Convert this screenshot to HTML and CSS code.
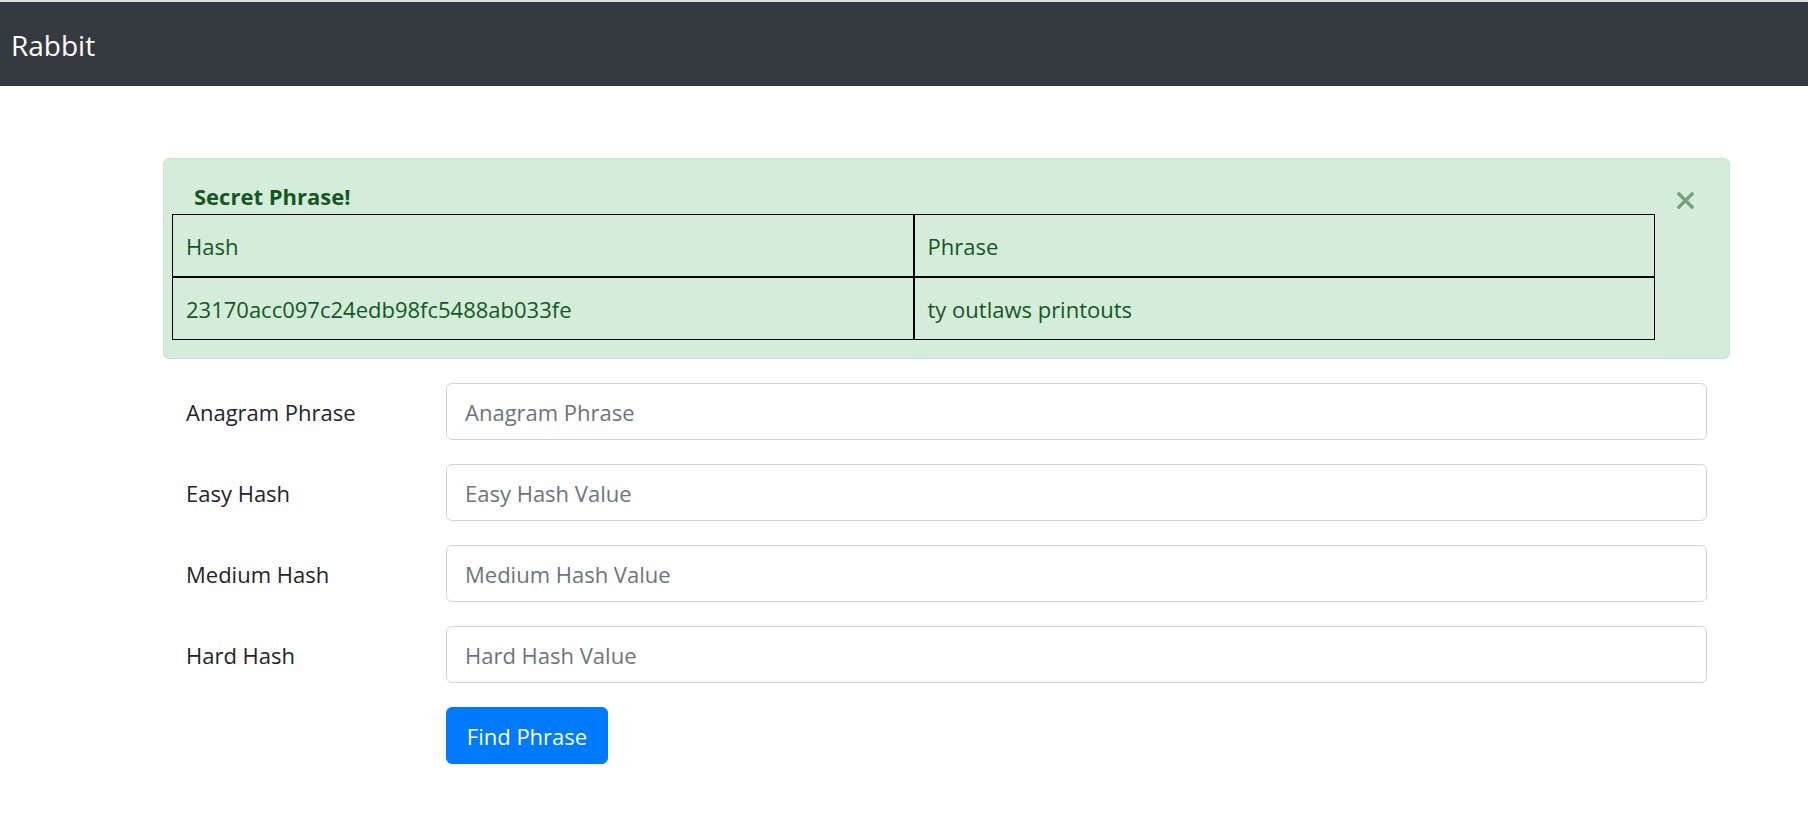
FILE: index.html
```html
<!DOCTYPE html>
<html lang="en">
<head>
<meta charset="utf-8">
<title>Rabbit</title>
<link rel="stylesheet" href="styles.css">
</head>
<body>
<nav class="navbar">
  <span class="brand">Rabbit</span>
</nav>
<main class="main">
  <div class="content">
    <div class="alert">
      <strong class="alert-title">Secret Phrase!</strong>
      <table class="result-table">
        <tr>
          <td>Hash</td>
          <td>Phrase</td>
        </tr>
        <tr>
          <td>23170acc097c24edb98fc5488ab033fe</td>
          <td>ty outlaws printouts</td>
        </tr>
      </table>
      <button class="close" type="button" aria-label="Close">
        <svg width="17" height="17" viewBox="0 0 17 17"><path d="M2 2 L15 15 M15 2 L2 15" stroke="currentColor" stroke-width="3.4" stroke-linecap="square"/></svg>
      </button>
    </div>
    <form class="form">
      <div class="form-row">
        <label class="form-label">Anagram Phrase</label>
        <div class="form-field"><input class="form-control" type="text" placeholder="Anagram Phrase"></div>
      </div>
      <div class="form-row">
        <label class="form-label">Easy Hash</label>
        <div class="form-field"><input class="form-control" type="text" placeholder="Easy Hash Value"></div>
      </div>
      <div class="form-row">
        <label class="form-label">Medium Hash</label>
        <div class="form-field"><input class="form-control" type="text" placeholder="Medium Hash Value"></div>
      </div>
      <div class="form-row">
        <label class="form-label">Hard Hash</label>
        <div class="form-field"><input class="form-control" type="text" placeholder="Hard Hash Value"></div>
      </div>
      <div class="form-row">
        <div></div>
        <div class="form-field"><button class="btn" type="button">Find Phrase</button></div>
      </div>
    </form>
  </div>
</main>
</body>
</html>
```
FILE: styles.css
```css
* { box-sizing: border-box; }

html, body {
  margin: 0;
  padding: 0;
  background: #fff;
}

body {
  border-top: 2px solid #e2e2e2;
  font-family: "Open Sans", "Noto Sans", sans-serif;
  font-size: 22px;
  line-height: 36px;
  color: #212529;
}

.navbar {
  height: 84px;
  background: #343a40;
  display: flex;
  align-items: center;
  padding: 2px 0 0 11px;
}

.brand {
  color: #fff;
  font-size: 28px;
  line-height: 42px;
}

.main {
  padding: 72px 0 0 163px;
}

.content {
  width: 1567px;
}

.alert {
  position: relative;
  background: #d4edda;
  border: 1px solid #c3e6cb;
  border-radius: 6px;
  color: #155724;
  padding: 18px 96px 18px 30px;
  margin-bottom: 24px;
}

.alert-title {
  display: block;
  font-weight: 700;
  line-height: 36px;
  padding-top: 1px;
  height: 37px;
}

.result-table {
  width: calc(100% + 44px);
  margin: 0 -22px;
  border-collapse: separate;
  border-spacing: 0;
}

.result-table td {
  width: 50%;
  border: 1px solid #000;
  padding: 13px 13px 12px;
  line-height: 36px;
  color: #155724;
}

.close {
  position: absolute;
  top: 33px;
  right: 35px;
  padding: 0;
  margin: 0;
  border: 0;
  background: transparent;
  color: #74a27f;
  width: 17px;
  height: 17px;
  display: block;
}

.close svg { display: block; }

.form-row {
  display: grid;
  grid-template-columns: 261px 1fr;
  margin-bottom: 24px;
}

.form-label {
  padding: 11px 23px 0;
  line-height: 36px;
  color: #212529;
}

.form-field {
  padding: 0 23px 0 22px;
}

.form-control {
  display: block;
  width: 100%;
  height: 57px;
  border: 1px solid #ced4da;
  border-radius: 6px;
  padding: 0 18px;
  font-family: inherit;
  font-size: 22px;
  color: #495057;
  background: #fff;
}

.form-control::placeholder {
  color: #6c757d;
  opacity: 1;
}

.btn {
  display: block;
  height: 57px;
  width: 162px;
  background: #007bff;
  border: 1px solid #007bff;
  border-radius: 6px;
  color: #fff;
  font-family: inherit;
  font-size: 22px;
  padding: 0;
}
```
